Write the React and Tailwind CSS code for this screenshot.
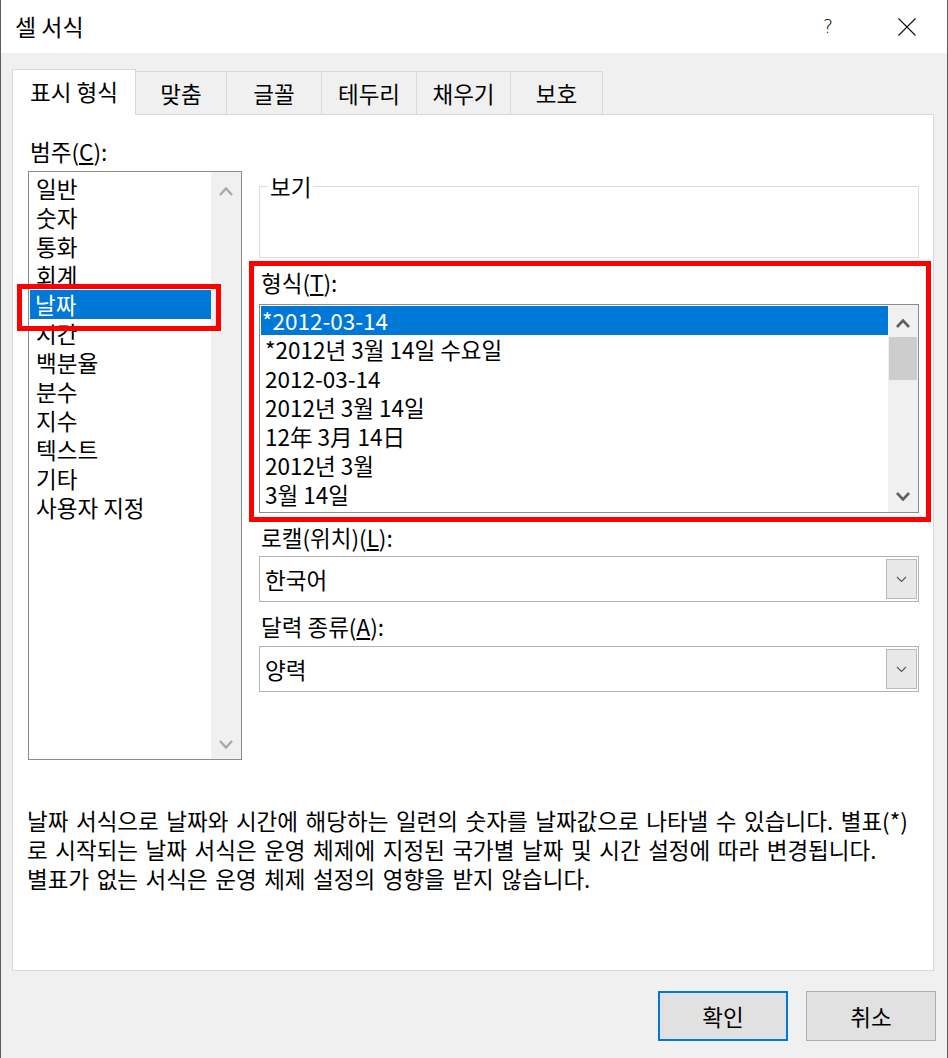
import React from "react";

const FONT = { fontFamily: '"Noto Sans CJK KR", "Noto Sans", sans-serif' };

function Chevron({ dir = "up", color = "#606060", w = 14, h = 9, sw = 2.6 }) {
  const pts = dir === "up" ? `1,${h - 1} ${w / 2},1.5 ${w - 1},${h - 1}` : `1,1 ${w / 2},${h - 1.5} ${w - 1},1`;
  return (
    <svg width={w} height={h} viewBox={`0 0 ${w} ${h}`}>
      <polyline points={pts} fill="none" stroke={color} strokeWidth={sw} strokeLinejoin="miter" />
    </svg>
  );
}

function SmallChevron() {
  return (
    <svg width="11" height="7" viewBox="0 0 11 7">
      <polyline points="1,1 5.5,5.5 10,1" fill="none" stroke="#555" strokeWidth="1.1" />
    </svg>
  );
}

const categories = ["일반", "숫자", "통화", "회계", "날짜", "시간", "백분율", "분수", "지수", "텍스트", "기타", "사용자 지정"];
const formats = ["*2012-03-14", "*2012년 3월 14일 수요일", "2012-03-14", "2012년 3월 14일", "12年 3月 14日", "2012년 3월", "3월 14일"];

function Select({ value }) {
  return (
    <div className="flex h-[46px] w-[660px] items-stretch border border-[#b4b4b4] bg-white py-[2px] pr-[1px]">
      <div className="flex flex-1 items-center pl-[5px] leading-[29px]">{value}</div>
      <div className="flex w-[31px] items-center justify-center border border-[#b9b9b9] bg-[#e8e8e8]">
        <SmallChevron />
      </div>
    </div>
  );
}

export default function App() {
  return (
    <div
      className="relative flex h-[1058px] w-[948px] flex-col overflow-hidden border-x border-[#5c5c5c] bg-[#f0f0f0] text-[22.5px] text-black"
      style={FONT}
    >
      {/* Title bar */}
      <div className="flex h-[53px] shrink-0 items-center bg-white">
        <div className="pl-[14px] text-[23px] leading-[29px]">셀 서식</div>
        <div className="ml-auto flex items-center pr-[31px]">
          <span className="text-[19px] font-light leading-none" style={{ fontFamily: '"DejaVu Sans", sans-serif' }}>?</span>
          <svg className="ml-[65px]" width="18" height="18" viewBox="0 0 18 18">
            <line x1="0.5" y1="0.5" x2="17.5" y2="17.5" stroke="#111" strokeWidth="1.1" />
            <line x1="17.5" y1="0.5" x2="0.5" y2="17.5" stroke="#111" strokeWidth="1.1" />
          </svg>
        </div>
      </div>

      {/* Tabs */}
      <div className="ml-[11px] mt-[16px] flex items-end">
        <div className="relative z-10 -mb-px flex h-[46px] w-[124px] items-center justify-center border-x border-t border-[#d9d9d9] bg-white pb-[2px] leading-[29px]">
          표시 형식
        </div>
        <div className="flex h-[43px] w-[91px] items-center justify-center border-r border-t border-[#d9d9d9] leading-[29px]">맞춤</div>
        <div className="flex h-[43px] w-[95px] items-center justify-center border-r border-t border-[#d9d9d9] leading-[29px]">글꼴</div>
        <div className="flex h-[43px] w-[95px] items-center justify-center border-r border-t border-[#d9d9d9] leading-[29px]">테두리</div>
        <div className="flex h-[43px] w-[94px] items-center justify-center border-r border-t border-[#d9d9d9] leading-[29px]">채우기</div>
        <div className="flex h-[43px] w-[92px] items-center justify-center border-r border-t border-[#d9d9d9] leading-[29px]">보호</div>
      </div>

      {/* Panel */}
      <div className="ml-[11px] flex h-[857px] w-[922px] flex-col border border-[#d9d9d9] bg-white">
        <div className="flex items-start">
          {/* Left column */}
          <div className="ml-[15px] flex w-[214px] flex-col pt-[22px]">
            <div className="h-[29px] pl-[2px] leading-[29px]">
              범주(<span className="underline underline-offset-2">C</span>):
            </div>
            <div className="mt-[5px] flex h-[589px] border border-[#8c8c8c] bg-white">
              <div className="flex flex-1 flex-col pl-px pt-[2px]">
                {categories.map((c, i) => (
                  <div
                    key={c}
                    className={
                      i === 4
                        ? "h-[29px] bg-[#0078d7] pl-[5px] leading-[29px] text-white"
                        : "h-[29px] pl-[6px] leading-[29px]"
                    }
                  >
                    {c}
                  </div>
                ))}
              </div>
              <div className="flex w-[30px] flex-col items-center justify-between bg-[#f0f0f0] pb-[10px] pt-[15px]">
                <Chevron dir="up" color="#a8a8a8" w={14} h={9} sw={2.4} />
                <Chevron dir="down" color="#a8a8a8" w={14} h={9} sw={2.4} />
              </div>
            </div>
          </div>

          {/* Right column */}
          <div className="ml-[17px] flex w-[660px] flex-col pt-[71px]">
            <div className="relative h-[72px] border border-[#dcdcdc]">
              <div className="absolute left-[8px] top-[-15px] bg-white px-[2px] leading-[29px]">보기</div>
            </div>
            <div className="mt-[10px] h-[29px] pl-[2px] leading-[29px]">
              형식(<span className="underline underline-offset-2">T</span>):
            </div>
            <div className="mt-[7px] flex h-[209px] border border-[#8c8c8c] bg-white">
              <div className="flex flex-1 flex-col pl-px pt-px">
                {formats.map((f, i) => (
                  <div
                    key={f}
                    className={
                      i === 0
                        ? "h-[29px] whitespace-nowrap bg-[#0078d7] pl-px leading-[29px] text-white"
                        : "h-[29px] whitespace-nowrap pl-[4px] leading-[29px]"
                    }
                  >
                    {f}
                  </div>
                ))}
              </div>
              <div className="flex w-[30px] flex-col bg-[#f0f0f0]">
                <div className="flex h-[32px] items-center justify-center pt-[4px]">
                  <Chevron dir="up" />
                </div>
                <div className="mx-px h-[43px] bg-[#cdcdcd]" />
                <div className="flex-1" />
                <div className="flex h-[32px] items-center justify-center">
                  <Chevron dir="down" />
                </div>
              </div>
            </div>
            <div className="mt-[10px] h-[29px] pl-[2px] leading-[29px]">
              로캘(위치)(<span className="underline underline-offset-2">L</span>):
            </div>
            <div className="mt-[4px]">
              <Select value="한국어" />
            </div>
            <div className="mt-[10px] h-[29px] pl-[2px] leading-[29px]">
              달력 종류(<span className="underline underline-offset-2">A</span>):
            </div>
            <div className="mt-[5px]">
              <Select value="양력" />
            </div>
          </div>
        </div>

        {/* Description */}
        <div className="mt-[46px] pl-[14px] leading-[29px] [word-spacing:2.5px]">
          <div className="whitespace-nowrap">날짜 서식으로 날짜와 시간에 해당하는 일련의 숫자를 날짜값으로 나타낼 수 있습니다. 별표(*)</div>
          <div className="whitespace-nowrap">로 시작되는 날짜 서식은 운영 체제에 지정된 국가별 날짜 및 시간 설정에 따라 변경됩니다.</div>
          <div className="whitespace-nowrap">별표가 없는 서식은 운영 체제 설정의 영향을 받지 않습니다.</div>
        </div>
      </div>

      {/* Buttons */}
      <div className="mr-[11px] mt-[20px] flex justify-end gap-[18px]">
        <button className="flex h-[50px] w-[130px] items-center justify-center border-2 border-[#0078d7] bg-[#e1e1e1] leading-[29px]">
          확인
        </button>
        <button className="flex h-[50px] w-[130px] items-center justify-center border border-[#adadad] bg-[#e1e1e1] leading-[29px]">
          취소
        </button>
      </div>

      {/* Red annotation boxes */}
      <div className="pointer-events-none absolute left-[16px] top-[284px] h-[47px] w-[204px] border-[5px] border-[#ff0000]" />
      <div className="pointer-events-none absolute left-[248px] top-[261px] h-[261px] w-[682px] border-[5px] border-[#ff0000]" />
    </div>
  );
}
